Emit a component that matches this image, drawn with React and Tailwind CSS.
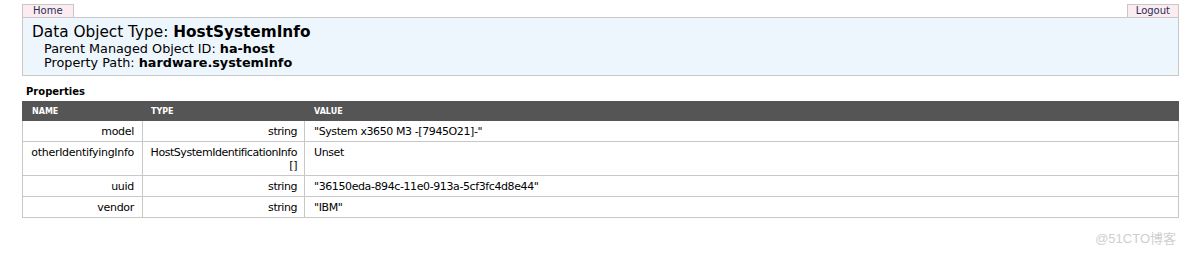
import React from 'react';

const rows = [
  { name: 'model', type: 'string', value: '"System x3650 M3 -[7945O21]-"' },
  { name: 'otherIdentifyingInfo', type: 'HostSystemIdentificationInfo', typeExtra: '[]', value: 'Unset', tall: true },
  { name: 'uuid', type: 'string', value: '"36150eda-894c-11e0-913a-5cf3fc4d8e44"' },
  { name: 'vendor', type: 'string', value: '"IBM"' },
];

const App = () => {
  return (
    <div className="w-[1184px] h-[253px] bg-white relative font-['DejaVu_Sans',sans-serif] text-black">
      <div className="pl-[22px] pr-[5px] pt-[4px]">
        {/* Tabs */}
        <div className="flex justify-between items-end h-[13px]">
          <div className="h-[13px] px-[10px] bg-[#fdecef] border border-b-0 border-[#c8c8c8] text-[10px] leading-[12px] text-[#1c2f5a]">
            Home
          </div>
          <div className="h-[13px] px-[8px] bg-[#fdecef] border border-b-0 border-[#c8c8c8] text-[10px] leading-[12px] text-[#1c2f5a]">
            Logout
          </div>
        </div>

        {/* Header box */}
        <div className="h-[59px] bg-[#eef6fd] border border-[#c8c8c8] pl-[9px] pt-[6px]">
          <div className="text-[15.3px] leading-[17px]">
            Data Object Type: <span className="font-bold">HostSystemInfo</span>
          </div>
          <div className="pl-[12px] text-[12.8px] leading-[15px]">
            Parent Managed Object ID: <span className="font-bold">ha-host</span>
          </div>
          <div className="pl-[12px] text-[12.8px] leading-[14px]">
            Property Path: <span className="font-bold">hardware.systemInfo</span>
          </div>
        </div>

        <div className="pt-[9px] pl-[4px] text-[10px] leading-[14px] font-bold">Properties</div>

        {/* Table */}
        <table className="mt-[2px] w-full table-fixed border-collapse text-[11px] leading-[13px] tracking-[-0.3px]">
          <colgroup>
            <col className="w-[120px]" />
            <col className="w-[162px]" />
            <col />
          </colgroup>
          <thead>
            <tr className="bg-[#555555] text-white h-[19px]">
              <th className="text-left font-bold text-[8px] tracking-normal pl-[9px] border border-[#555555]">NAME</th>
              <th className="text-left font-bold text-[8px] tracking-normal pl-[8px] border border-[#555555]">TYPE</th>
              <th className="text-left font-bold text-[8px] tracking-normal pl-[9px] border border-[#555555]">VALUE</th>
            </tr>
          </thead>
          <tbody>
            {rows.map((r) => (
              <tr key={r.name} className={r.tall ? 'h-[34px]' : 'h-[21px]'}>
                <td className="border border-[#c8c8c8] text-right pr-[8px] align-top pt-[4px] whitespace-nowrap">{r.name}</td>
                <td className="border border-[#c8c8c8] text-right pr-[7px] align-top pt-[4px] whitespace-nowrap tracking-[-0.45px]">
                  {r.type}
                  {r.typeExtra && <div>{r.typeExtra}</div>}
                </td>
                <td className="border border-[#c8c8c8] text-left pl-[9px] align-top pt-[4px] tracking-[-0.4px]">{r.value}</td>
              </tr>
            ))}
          </tbody>
        </table>
      </div>

      <div className="absolute right-[8px] top-[231px] text-[13px] leading-[15px] text-[#cfcfcf] font-['Liberation_Sans','Noto_Sans_CJK_SC',sans-serif]">
        @51CTO博客
      </div>
    </div>
  );
};

export default App;
